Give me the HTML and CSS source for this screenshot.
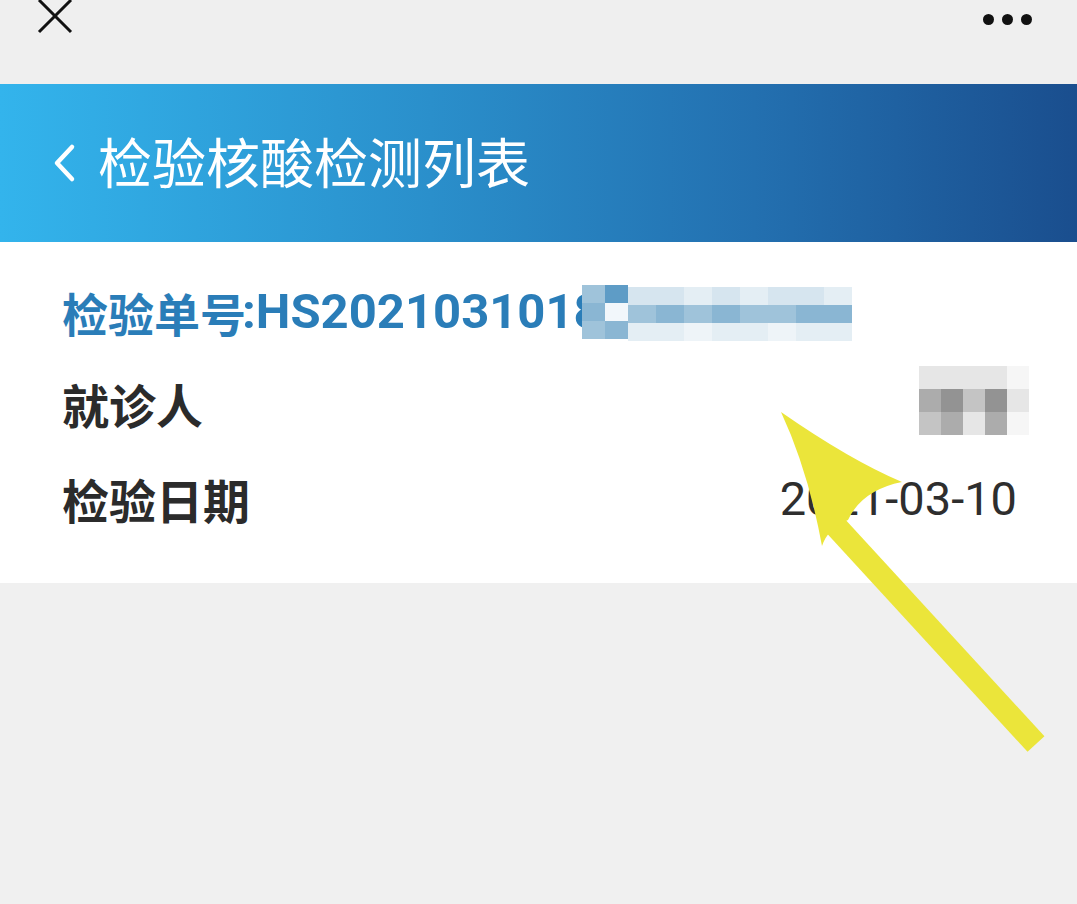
FILE: index.html
```html
<!DOCTYPE html>
<html lang="zh-CN">
<head>
  <meta charset="UTF-8" />
  <meta name="viewport" content="width=device-width, initial-scale=1.0"/>
  <title>检验核酸检测列表</title>
  <link rel="stylesheet" href="styles.css">
</head>
<body>

  <div class="page">
    <div class="topbar">
      <svg class="close-icon" width="40" height="40" viewBox="0 0 40 40">
        <path d="M4 2 L36 34 M36 2 L4 34" stroke="#111" stroke-width="3" fill="none"/>
      </svg>
      <div class="more">
        <span class="dot"></span><span class="dot"></span><span class="dot"></span>
      </div>
    </div>

    <div class="header">
      <svg class="back-icon" width="30" height="40" viewBox="0 0 30 40">
        <path d="M22 4 L7 20 L22 36" stroke="#fff" stroke-width="4.5" fill="none" stroke-linecap="round" stroke-linejoin="round"/>
      </svg>
      <h1 class="title">检验核酸检测列表</h1>
    </div>

    <div class="card">
      <div class="row">
        <div class="order">
          <span class="order-cjk">检验单号</span><span class="order-no">:HS2021031018</span>
          <div class="mosaic mosaic-small">
            <span class="c b2"></span><span class="c b4"></span>
            <span class="c b3"></span><span class="c b1"></span>
            <span class="c b2"></span><span class="c b3"></span>
          </div>
          <div class="mosaic mosaic-order">
            <span class="c b5"></span><span class="c b5"></span><span class="c b6"></span><span class="c b5"></span><span class="c b6"></span><span class="c b5"></span><span class="c b5"></span><span class="c b6"></span>
            <span class="c b2"></span><span class="c b3"></span><span class="c b2"></span><span class="c b3"></span><span class="c b2"></span><span class="c b2"></span><span class="c b3"></span><span class="c b3"></span>
            <span class="c b6"></span><span class="c b6"></span><span class="c b7"></span><span class="c b6"></span><span class="c b6"></span><span class="c b7"></span><span class="c b6"></span><span class="c b6"></span>
          </div>
        </div>
      </div>
      <div class="row">
        <span class="label">就诊人</span>
        <div class="mosaic mosaic-name">
          <span class="c g1"></span><span class="c g1"></span><span class="c g1"></span><span class="c g1"></span><span class="c g0"></span>
          <span class="c g3"></span><span class="c g4"></span><span class="c g2"></span><span class="c g4"></span><span class="c g1"></span>
          <span class="c g2"></span><span class="c g3"></span><span class="c g1"></span><span class="c g3"></span><span class="c g0"></span>
        </div>
      </div>
      <div class="row">
        <span class="label">检验日期</span>
        <span class="value">2021-03-10</span>
      </div>
    </div>

    <div class="rest"></div>
  </div>

  <svg class="arrow" width="1077" height="904" viewBox="0 0 1077 904">
    <path d="M832 522 L1036 744" stroke="#ebe53a" stroke-width="23" fill="none"/>
    <path d="M781 412 Q850 460 902 482 Q862 490 848 520 Q828 528 822 546 Q808 470 781 412 Z" fill="#ebe53a"/>
  </svg>

</body>
</html>
```

FILE: styles.css
```css
* { box-sizing: border-box; }

body {
  margin: 0;
  background: #f0f0f0;
  font-family: Roboto, 'Noto Sans CJK SC', sans-serif;
  overflow: hidden;
}

.page {
  display: flex;
  flex-direction: column;
  min-height: 904px;
}

.topbar {
  height: 84px;
  background: #efefef;
  display: flex;
  justify-content: space-between;
  align-items: flex-start;
  padding: 0 45px 0 35px;
}

.close-icon {
  margin-top: -2px;
}

.more {
  display: flex;
  gap: 8px;
  margin-top: 14px;
}

.dot {
  width: 11px;
  height: 11px;
  border-radius: 50%;
  background: #111;
}

.header {
  height: 158px;
  background: linear-gradient(90deg, #33b4ec 0%, #2a8fcb 40%, #2370b0 70%, #1a4e8e 100%);
  display: flex;
  align-items: center;
  padding-left: 50px;
  gap: 18px;
}

.title {
  margin: 0;
  color: #fff;
  font-family: 'Noto Sans CJK SC', sans-serif;
  font-weight: 400;
  font-size: 54px;
  line-height: 1;
  margin-top: -4px;
}

.card {
  background: #fff;
  padding: 22px 58px 34px 62px;
  display: flex;
  flex-direction: column;
  box-shadow: 0 2px 3px rgba(0, 0, 0, 0.04);
}

.row {
  height: 95px;
  display: flex;
  align-items: center;
  justify-content: space-between;
}

.order {
  display: flex;
  align-items: center;
  color: #2a7db8;
  font-weight: 700;
}

.order-cjk {
  font-family: 'Noto Sans CJK SC', sans-serif;
  font-size: 46px;
}

.order-no {
  font-family: Roboto, sans-serif;
  font-size: 49px;
  margin-left: -4px;
}

.label {
  font-family: 'Noto Sans CJK SC', sans-serif;
  font-weight: 700;
  font-size: 47px;
  color: #2b2b2b;
  margin-top: -6px;
}

.value {
  font-family: Roboto, sans-serif;
  font-size: 47px;
  color: #2e2e2e;
  margin-right: 2px;
  margin-top: -6px;
}

.mosaic {
  display: grid;
}

.mosaic-small {
  grid-template-columns: repeat(2, 23px);
  grid-auto-rows: 18px;
  margin-left: -20px;
}

.mosaic-order {
  grid-template-columns: repeat(8, 28px);
  grid-auto-rows: 18px;
  margin-top: 4px;
}

.mosaic-name {
  grid-template-columns: repeat(5, 22px);
  grid-auto-rows: 23px;
  margin-right: -10px;
  margin-top: -12px;
}

.c { display: block; }

.b1 { background: #f2f7fb; }
.b2 { background: #9fc3da; }
.b3 { background: #8ab6d3; }
.b4 { background: #5e9cc6; }
.b5 { background: #d6e5ef; }
.b6 { background: #e4eef4; }
.b7 { background: #eef4f8; }

.g0 { background: #f6f6f6; }
.g1 { background: #e6e6e6; }
.g2 { background: #c4c4c4; }
.g3 { background: #acacac; }
.g4 { background: #939393; }

.rest {
  flex: 1;
  background: #f0f0f0;
}

.arrow {
  position: absolute;
  top: 0;
  left: 0;
  pointer-events: none;
}
```
